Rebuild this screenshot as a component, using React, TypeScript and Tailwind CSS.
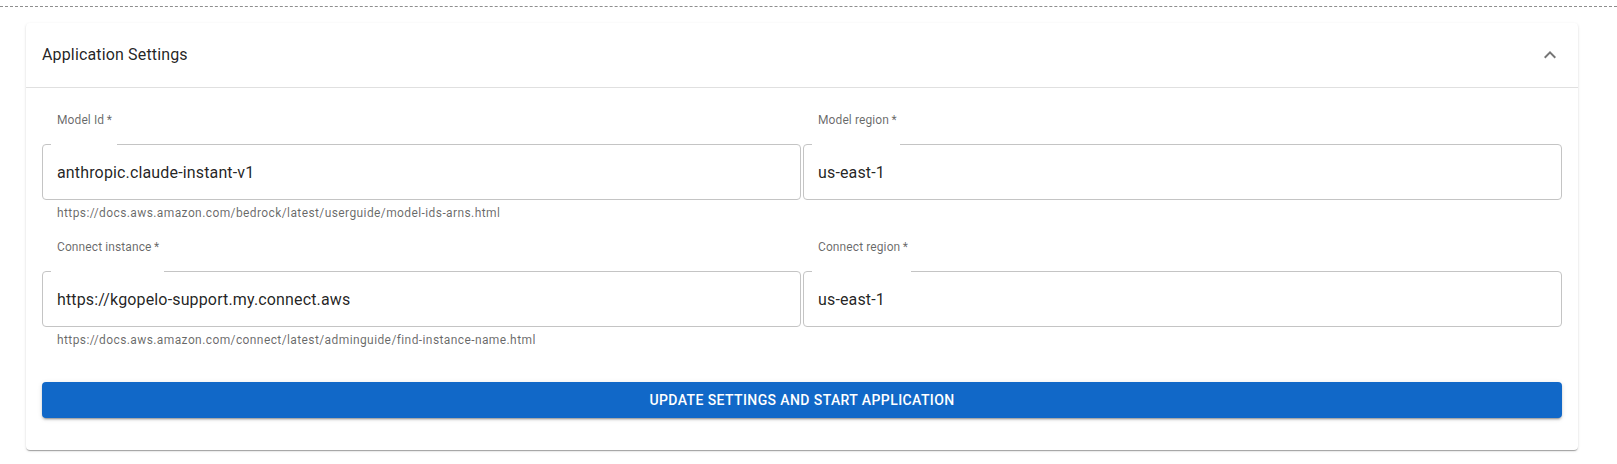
import React from "react";

type Field = {
  label: string;
  value: string;
  helper?: string;
  notch: string;
};

const fields: Field[] = [
  {
    label: "Model Id\u2009*",
    value: "anthropic.claude-instant-v1",
    helper: "https://docs.aws.amazon.com/bedrock/latest/userguide/model-ids-arns.html",
    notch: "w-[66px]",
  },
  { label: "Model region\u2009*", value: "us-east-1", notch: "w-[88px]" },
  {
    label: "Connect instance\u2009*",
    value: "https://kgopelo-support.my.connect.aws",
    helper: "https://docs.aws.amazon.com/connect/latest/adminguide/find-instance-name.html",
    notch: "w-[113px]",
  },
  { label: "Connect region\u2009*", value: "us-east-1", notch: "w-[99px]" },
];

function OutlinedField({ f }: { f: Field }) {
  return (
    <div className="flex flex-col">
      <label className="pl-[15px] text-[12px] leading-[16px] tracking-[0.1px] text-[rgba(0,0,0,0.6)]">
        {f.label}
      </label>
      <div className="relative mt-[16px] flex h-[56px] items-center rounded-[4px] border border-[#c4c4c4] px-[14px]">
        <span className={`absolute -top-px left-[8px] h-[1px] bg-white ${f.notch}`} />
        <span className="text-[16px] leading-[23px] tracking-[0.15px] text-[rgba(0,0,0,0.87)]">
          {f.value}
        </span>
      </div>
      {f.helper && (
        <p className="mt-[3px] pl-[15px] text-[12px] leading-[20px] tracking-[0.4px] text-[rgba(0,0,0,0.6)]">
          {f.helper}
        </p>
      )}
    </div>
  );
}

export default function App() {
  return (
    <div className="min-h-[464px] bg-white pt-[6px] [font-family:Roboto,'Liberation_Sans',sans-serif]">
      <div className="border-t border-dashed border-[#8e8e8e]">
        <div className="ml-[26px] mt-[16px] w-[1552px] rounded-[4px] bg-white shadow-[0px_2px_1px_-1px_rgba(0,0,0,0.2),0px_1px_1px_0px_rgba(0,0,0,0.14),0px_1px_3px_0px_rgba(0,0,0,0.12)]">
          <div className="flex h-[64px] items-center justify-between px-[16px]">
            <span className="text-[16px] leading-[24px] tracking-[0.15px] text-[rgba(0,0,0,0.87)]">
              Application Settings
            </span>
            <svg width="24" height="24" viewBox="0 0 24 24" className="fill-[rgba(0,0,0,0.54)]">
              <path d="m12 8-6 6 1.41 1.41L12 10.83l4.59 4.58L18 14z" />
            </svg>
          </div>
          <div className="border-t border-[#e0e0e0] px-[16px] pb-[32px] pt-[24px]">
            <div className="grid grid-cols-2 gap-x-[2px] gap-y-[16px]">
              {fields.map((f) => (
                <OutlinedField key={f.label} f={f} />
              ))}
            </div>
            <button className="mt-[32px] flex h-[36px] w-full items-center justify-center rounded-[4px] bg-[#1168c8] text-[14px] font-medium uppercase leading-[24px] tracking-[0.4px] text-white shadow-[0px_3px_1px_-2px_rgba(0,0,0,0.2),0px_2px_2px_0px_rgba(0,0,0,0.14),0px_1px_5px_0px_rgba(0,0,0,0.12)]">
              Update settings and start application
            </button>
          </div>
        </div>
      </div>
    </div>
  );
}
